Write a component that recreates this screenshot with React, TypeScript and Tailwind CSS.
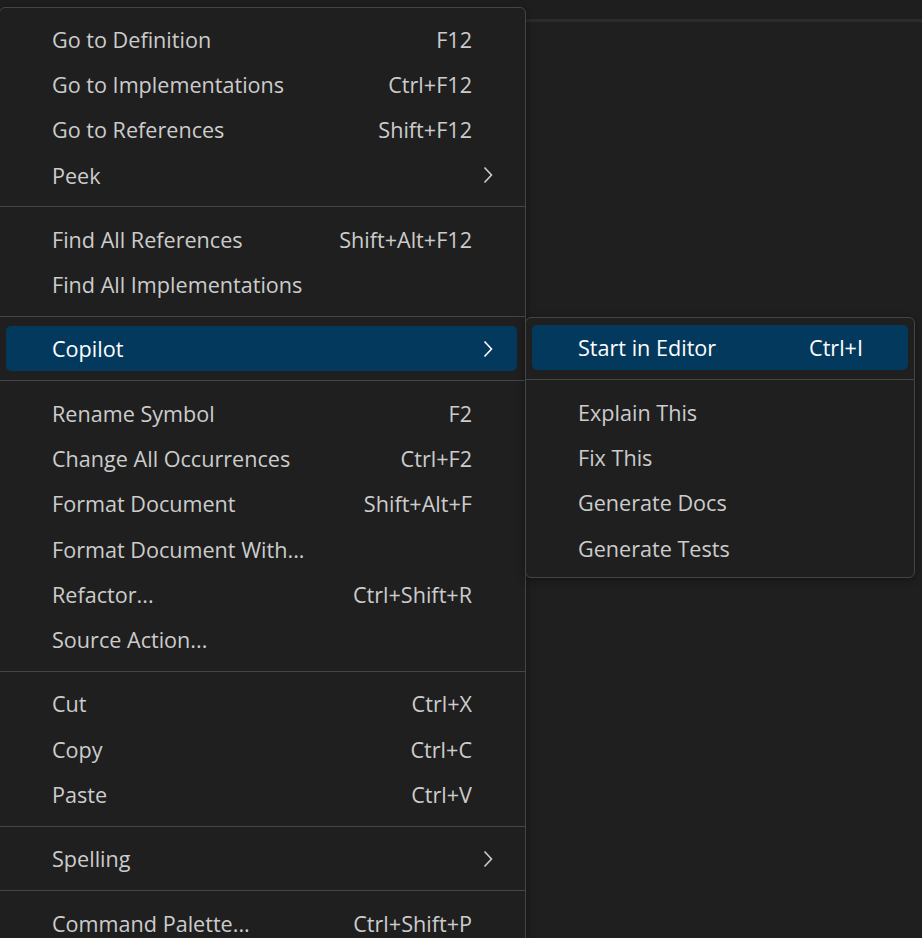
import React from 'react';

type Item = { label: string; keys?: string; sub?: boolean; active?: boolean } | 'sep';

const mainItems: Item[] = [
  { label: 'Go to Definition', keys: 'F12' },
  { label: 'Go to Implementations', keys: 'Ctrl+F12' },
  { label: 'Go to References', keys: 'Shift+F12' },
  { label: 'Peek', sub: true },
  'sep',
  { label: 'Find All References', keys: 'Shift+Alt+F12' },
  { label: 'Find All Implementations' },
  'sep',
  { label: 'Copilot', sub: true, active: true },
  'sep',
  { label: 'Rename Symbol', keys: 'F2' },
  { label: 'Change All Occurrences', keys: 'Ctrl+F2' },
  { label: 'Format Document', keys: 'Shift+Alt+F' },
  { label: 'Format Document With...' },
  { label: 'Refactor...', keys: 'Ctrl+Shift+R' },
  { label: 'Source Action...' },
  'sep',
  { label: 'Cut', keys: 'Ctrl+X' },
  { label: 'Copy', keys: 'Ctrl+C' },
  { label: 'Paste', keys: 'Ctrl+V' },
  'sep',
  { label: 'Spelling', sub: true },
  'sep',
  { label: 'Command Palette...', keys: 'Ctrl+Shift+P' },
];

const copilotItems: Item[] = [
  { label: 'Start in Editor', keys: 'Ctrl+I', active: true },
  'sep',
  { label: 'Explain This' },
  { label: 'Fix This' },
  { label: 'Generate Docs' },
  { label: 'Generate Tests' },
];

const Chevron = () => (
  <svg width="10" height="18" viewBox="0 0 10 18" fill="none" className="shrink-0">
    <path d="M1.5 1.5 L8.5 9 L1.5 16.5" stroke="currentColor" strokeWidth="1.6" strokeLinejoin="miter" />
  </svg>
);

const MenuList: React.FC<{ items: Item[]; mainMenu?: boolean }> = ({ items, mainMenu }) => (
  <>
    {items.map((item, i) => {
      if (item === 'sep') {
        return (
          <div key={i} className="pt-[8.4px] pb-[9.5px]">
            <div className="h-px bg-[#454545]" />
          </div>
        );
      }
      return (
        <div
          key={i}
          className={`flex items-center h-[45.33px] rounded-[5px] ${mainMenu ? 'ml-[6px] mr-[8px]' : 'mx-[6px]'} ${
            item.active ? 'bg-[#04395e] text-white' : 'text-[#cccccc]'
          }`}
        >
          <span className="pl-[46px] pt-[1px] whitespace-nowrap">{item.label}</span>
          <span className="flex-1 min-w-[60px]" />
          {item.keys && <span className="pr-[45px] pt-[1px] whitespace-nowrap">{item.keys}</span>}
          {item.sub && (
            <span className="pr-[24px] flex items-center">
              <Chevron />
            </span>
          )}
        </div>
      );
    })}
  </>
);

export default function App() {
  return (
    <div
      className="relative w-[922px] h-[938px] overflow-hidden bg-[#1f1f1f] text-[21.6px] leading-none"
      style={{ fontFamily: '"Open Sans", "Noto Sans", sans-serif' }}
    >
      {/* editor backdrop */}
      <div className="h-[19px] bg-[#1e1e1e]" />
      <div className="h-[3px] bg-[#2b2b2b]" />

      {/* main context menu */}
      <div className="absolute left-[-1px] top-[7px] w-[527px] pt-[8.3px] pb-[8px] bg-[#1f1f1f] border border-[#454545] rounded-[6px] shadow-[0_2px_8px_rgba(0,0,0,0.36)]">
        <MenuList items={mainItems} mainMenu />
      </div>

      {/* copilot submenu */}
      <div className="absolute left-[525px] top-[317px] w-[390px] pt-[7px] pb-[6px] bg-[#1f1f1f] border border-[#454545] rounded-[6px] shadow-[0_2px_8px_rgba(0,0,0,0.36)]">
        <MenuList items={copilotItems} />
      </div>
    </div>
  );
}
